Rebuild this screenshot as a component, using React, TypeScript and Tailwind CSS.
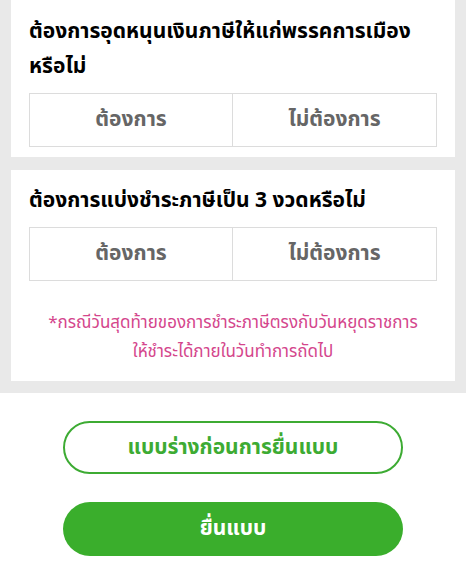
const font = { fontFamily: '"Noto Sans Thai", "Noto Sans", "Liberation Sans", sans-serif' };

function Choice() {
  return (
    <div className="grid grid-cols-2 border border-[#dcdcdc]">
      <div className="flex h-[52px] items-center justify-center border-r border-[#dcdcdc] text-[21px] font-bold text-[#666]">
        ต้องการ
      </div>
      <div className="flex h-[52px] items-center justify-center text-[21px] font-bold text-[#666]">
        ไม่ต้องการ
      </div>
    </div>
  );
}

export default function App() {
  return (
    <div style={font} className="flex h-[585px] w-[466px] flex-col overflow-hidden bg-white">
      <div className="flex flex-col gap-[13px] bg-[#e9e9e9] px-[11px] pb-[12px]">
        <div className="bg-white px-[18px] pb-[10px] pt-[14px]">
          <h2 className="text-[21px] font-bold leading-[35px] text-black">
            ต้องการอุดหนุนเงินภาษีให้แก่พรรคการเมือง
            <br />
            หรือไม่
          </h2>
          <div className="mt-[9px]">
            <Choice />
          </div>
        </div>
        <div className="bg-white px-[18px] pb-[14px] pt-[16px]">
          <h2 className="text-[21px] font-bold leading-[30px] text-black">
            ต้องการแบ่งชำระภาษีเป็น 3 งวดหรือไม่
          </h2>
          <div className="mt-[11px]">
            <Choice />
          </div>
          <p className="mt-[28px] text-center text-[17px] leading-[29px] text-[#d4468c]">
            *กรณีวันสุดท้ายของการชำระภาษีตรงกับวันหยุดราชการ
            <br />
            ให้ชำระได้ภายในวันทำการถัดไป
          </p>
        </div>
      </div>
      <div className="flex flex-col items-center gap-[28px] pt-[28px]">
        <button className="flex h-[53px] w-[340px] items-center justify-center rounded-full border-2 border-[#3dab33] bg-white text-[21px] font-bold text-[#3dab33]">
          แบบร่างก่อนการยื่นแบบ
        </button>
        <button className="flex h-[54px] w-[340px] items-center justify-center rounded-full bg-[#3aae2c] text-[21px] font-bold text-white">
          ยื่นแบบ
        </button>
      </div>
    </div>
  );
}
